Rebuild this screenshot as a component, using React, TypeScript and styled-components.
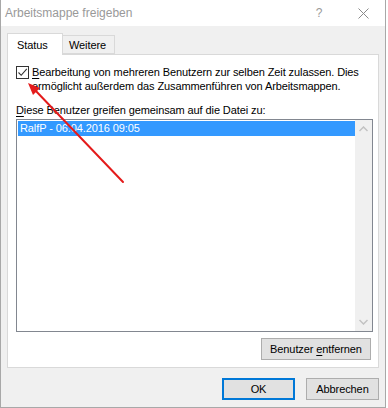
import React from "react";
import styled, { createGlobalStyle } from "styled-components";

const Global = createGlobalStyle`
  html, body { margin: 0; padding: 0; background: #ffffff; }
  body { font-family: "Liberation Sans", Arial, sans-serif; }
`;

const Window = styled.div`
  position: relative;
  width: 384px;
  height: 407px;
  border: 1px solid #a8a8a8;
  border-top: none;
  background: #f0f0f0;
  display: flex;
  flex-direction: column;
  font-size: 11px;
  letter-spacing: -0.1px;
  color: #000;
`;

const TitleBar = styled.div`
  height: 26px;
  background: #ffffff;
  display: flex;
  align-items: center;
  padding-left: 4px;
  color: #999999;
  font-size: 12px;
  letter-spacing: 0;
`;

const TitleText = styled.span`
  flex: 1;
`;

const TitleButton = styled.span<{ $w: number }>`
  width: ${(p) => p.$w}px;
  display: flex;
  justify-content: center;
  align-items: center;
  color: #9a9a9a;
`;

const Body = styled.div`
  flex: 1;
  display: flex;
  flex-direction: column;
  padding: 7px 6px 0 6px;
`;

const TabStrip = styled.div`
  display: flex;
  align-items: flex-end;
  height: 21px;
  position: relative;
  z-index: 1;
`;

const Tab = styled.div<{ $active?: boolean }>`
  box-sizing: border-box;
  height: ${(p) => (p.$active ? 22 : 19)}px;
  margin-bottom: ${(p) => (p.$active ? -1 : 0)}px;
  padding: 0 ${(p) => (p.$active ? 9 : 6)}px;
  margin-left: ${(p) => (p.$active ? 0 : -1)}px;
  border: 1px solid #d9d9d9;
  border-bottom: ${(p) => (p.$active ? "none" : "1px solid #d9d9d9")};
  background: ${(p) => (p.$active ? "#ffffff" : "#f0f0f0")};
  display: flex;
  align-items: center;
  z-index: ${(p) => (p.$active ? 2 : 1)};
  width: ${(p) => (p.$active ? 56 : 53)}px;
`;

const Panel = styled.div`
  box-sizing: border-box;
  width: 372px;
  height: 314px;
  border: 1px solid #d9d9d9;
  background: #ffffff;
  padding: 10px 5px 6px 8px;
  display: flex;
  flex-direction: column;
`;

const CheckRow = styled.div`
  display: flex;
  align-items: flex-start;
  height: 28px;
`;

const CheckBox = styled.span`
  box-sizing: border-box;
  width: 13px;
  height: 13px;
  border: 1px solid #333333;
  background: #fff;
  margin-top: 1px;
  margin-right: 3px;
  flex: none;
  display: flex;
  align-items: center;
  justify-content: center;
`;

const CheckLabel = styled.div`
  line-height: 14px;
  white-space: nowrap;
`;

const Label = styled.div`
  margin-top: 10px;
  line-height: 14px;
  white-space: nowrap;
`;

const ListBox = styled.div`
  box-sizing: border-box;
  margin-top: 2px;
  width: 357px;
  height: 213px;
  border: 1px solid #828790;
  display: flex;
`;

const ListItems = styled.div`
  flex: 1;
  padding: 1px 0 0 1px;
`;

const ListItem = styled.div<{ $selected?: boolean }>`
  height: 15px;
  line-height: 15px;
  padding-left: 2px;
  background: ${(p) => (p.$selected ? "#3399ff" : "transparent")};
  color: ${(p) => (p.$selected ? "#ffffff" : "#000")};
`;

const ScrollBar = styled.div`
  width: 17px;
  background: #f0f0f0;
  display: flex;
  flex-direction: column;
  justify-content: space-between;
  align-items: center;
  padding: 6px 0;
`;

const ButtonRow = styled.div<{ $pad: number; $top: number }>`
  display: flex;
  justify-content: flex-end;
  gap: 11px;
  padding-right: ${(p) => p.$pad}px;
  margin-top: ${(p) => p.$top}px;
`;

const Button = styled.div<{ $w: number; $default?: boolean }>`
  box-sizing: border-box;
  width: ${(p) => p.$w}px;
  height: 22px;
  background: #e1e1e1;
  border: ${(p) => (p.$default ? "2px solid #0078d7" : "1px solid #adadad")};
  display: flex;
  align-items: center;
  justify-content: center;
  white-space: nowrap;
`;

const U = styled.span`
  text-decoration: underline;
  text-underline-offset: 2px;
`;

const Arrow = styled.svg`
  position: absolute;
  left: 0;
  top: 0;
  pointer-events: none;
`;

export default function App() {
  return (
    <>
      <Global />
      <Window>
        <TitleBar>
          <TitleText>Arbeitsmappe freigeben</TitleText>
          <TitleButton $w={44}>?</TitleButton>
          <TitleButton $w={44}>
            <svg width="11" height="11" viewBox="0 0 11 11">
              <path d="M0.5 0.5 L10.5 10.5 M10.5 0.5 L0.5 10.5" stroke="#8a8a8a" strokeWidth="1" />
            </svg>
          </TitleButton>
        </TitleBar>
        <Body>
          <TabStrip>
            <Tab $active>Status</Tab>
            <Tab>Weitere</Tab>
          </TabStrip>
          <Panel>
            <CheckRow>
              <CheckBox>
                <svg width="11" height="11" viewBox="0 0 11 11">
                  <path d="M1.5 5.5 L4.2 8.3 L9.8 1.8" stroke="#333" strokeWidth="1.1" fill="none" />
                </svg>
              </CheckBox>
              <CheckLabel>
                <U>B</U>earbeitung von mehreren Benutzern zur selben Zeit zulassen. Dies
                <br />
                ermöglicht außerdem das Zusammenführen von Arbeitsmappen.
              </CheckLabel>
            </CheckRow>
            <Label>
              <U>D</U>iese Benutzer greifen gemeinsam auf die Datei zu:
            </Label>
            <ListBox>
              <ListItems>
                <ListItem $selected>RalfP - 06.04.2016 09:05</ListItem>
              </ListItems>
              <ScrollBar>
                <svg width="9" height="6" viewBox="0 0 9 6">
                  <path d="M0.5 5 L4.5 1 L8.5 5" stroke="#c2c2c2" strokeWidth="1.5" fill="none" />
                </svg>
                <svg width="9" height="6" viewBox="0 0 9 6">
                  <path d="M0.5 1 L4.5 5 L8.5 1" stroke="#c2c2c2" strokeWidth="1.5" fill="none" />
                </svg>
              </ScrollBar>
            </ListBox>
            <ButtonRow $pad={2} $top={6}>
              <Button $w={110}>
                Benutzer&nbsp;<U>e</U>ntfernen
              </Button>
            </ButtonRow>
          </Panel>
          <ButtonRow $pad={0} $top={10}>
            <Button $w={73} $default>
              OK
            </Button>
            <Button $w={73}>Abbrechen</Button>
          </ButtonRow>
        </Body>
        <Arrow width="386" height="408" viewBox="0 0 386 408">
          <line x1="122" y1="182" x2="33" y2="89" stroke="#e41b1b" strokeWidth="2" strokeLinecap="round" />
          <polygon points="27,83 39,88 32,95" fill="#e41b1b" />
        </Arrow>
      </Window>
    </>
  );
}
